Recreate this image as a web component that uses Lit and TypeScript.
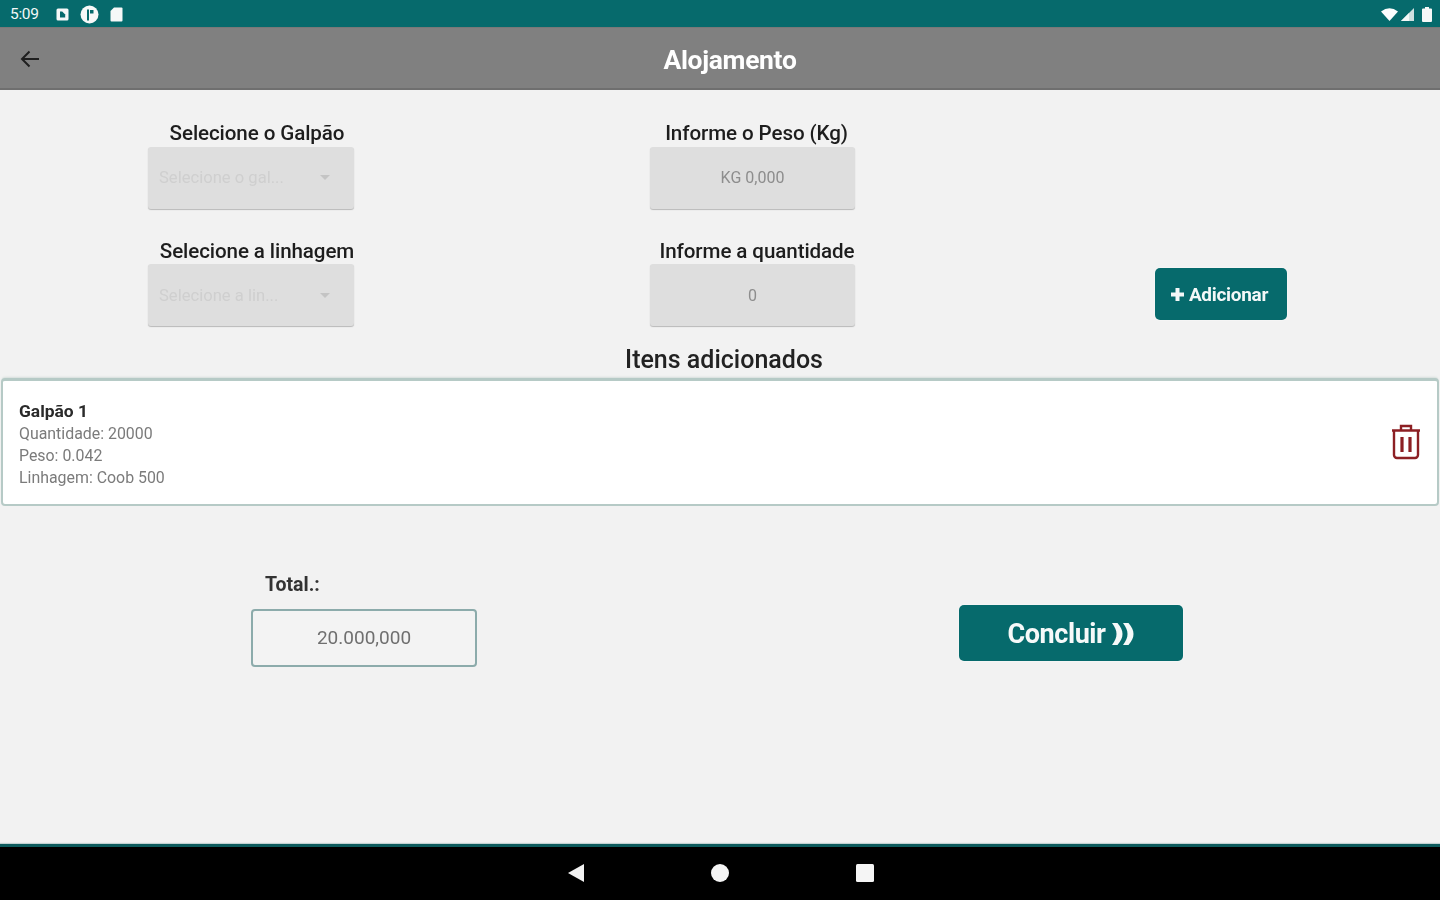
import { LitElement, html, css } from "lit";
import { customElement } from "lit/decorators.js";

@customElement("app-root")
export class AppRoot extends LitElement {
  static styles = css`
    :host { display: block; width: 1440px; height: 900px; font-family: Roboto, "Liberation Sans", sans-serif; background: #f2f2f2; overflow: hidden; }
    * { box-sizing: border-box; }
    .screen { width: 1440px; height: 900px; display: flex; flex-direction: column; filter: blur(0.6px); }
    .status { height: 27px; flex: none; background: #066a6c; display: flex; align-items: center; padding: 1px 8px 0 10px; color: #f4f8f8; font-size: 15.5px; }
    .status .time { width: 46px; letter-spacing: -0.3px; }
    .status svg { display: block; }
    .sl { display: flex; align-items: center; gap: 11px; }
    .sr { margin-left: auto; display: flex; align-items: center; gap: 3px; }
    .bar { height: 63px; flex: none; background: #808080; border-top: 1px solid #787878; border-bottom: 2px solid #6f6f6f; display: flex; align-items: center; padding-left: 20px; }
    .bar > svg { margin-top: 1px; }
    .bar .title { flex: 1; text-align: center; padding: 3px 20px 0 0; color: #fff; font-size: 26.4px; font-weight: 700; letter-spacing: -0.3px; }
    .main { flex: 1; display: flex; flex-direction: column; }
    .form { display: grid; grid-template-columns: 206px 205px 132px; column-gap: 296px; row-gap: 30px; padding: 31px 0 0 148px; }
    .form .add { margin-left: 4px; align-self: end; margin-bottom: 6px; }
    .field { display: flex; flex-direction: column; }
    .label { height: 25.5px; text-align: center; font-size: 20.6px; font-weight: 500; color: #1d1d1d; line-height: 24px; white-space: nowrap; letter-spacing: -0.1px; }
    .label.s { transform: translateX(6px); }
    .label.p { transform: translateX(4px); }
    .label.q { transform: translateX(4.5px); }
    .box { height: 62px; background: #dedede; border-radius: 3px; box-shadow: 0 1px 1px #b9b9b9; display: flex; align-items: center; font-size: 16px; }
    .box.center { justify-content: center; color: #8d8d8d; }
    .box.sel { padding: 0 24px 0 11px; justify-content: space-between; color: #cfcfcf; font-size: 16.6px; }
    .caret { width: 0; height: 0; border-left: 5px solid transparent; border-right: 5px solid transparent; border-top: 5px solid #c4c4c4; }
    .add { width: 132px; height: 52px; background: #066a6c; border-radius: 5px; color: #f4f8f8; font-size: 19px; font-weight: 700; display: flex; align-items: center; justify-content: center; gap: 4px; padding-right: 4px; box-shadow: 0 0 2px #fff; letter-spacing: -0.3px; }
    h2 { margin: 22px 0 0 0; height: 29.5px; line-height: 24px; text-align: center; font-size: 25px; font-weight: 500; color: #222; transform: translateX(4px); }
    .card { margin: 0 1px; height: 128px; background: #fff; border: 2px solid #b6cac6; border-top-width: 3px; border-radius: 4px; display: flex; align-items: center; justify-content: space-between; padding: 0 16px 0 16px; box-shadow: 0 -2px 2px -1px #d5dedb; }
    .info { display: flex; flex-direction: column; font-size: 15.9px; line-height: 21.6px; color: #7b7b7b; padding-top: 5px; }
    .info b { font-weight: 700; color: #2a2a2a; font-size: 17.4px; margin-bottom: 1px; }
    .bottom { display: flex; padding: 66px 0 0 251px; align-items: flex-start; }
    .total label { display: block; height: 37px; margin-left: 14px; font-size: 19.5px; line-height: 26px; font-weight: 700; color: #333; }
    .tbox { width: 226px; height: 58px; border: 2px solid #8cabab; border-radius: 4px; background: #f3f3f3; display: flex; align-items: center; justify-content: center; font-size: 19px; color: #6f6f6f; }
    .go { margin: 33px 0 0 482px; width: 224px; height: 56px; background: #066a6c; border-radius: 5px; display: flex; align-items: center; justify-content: center; gap: 5px; padding-top: 3px; color: #f6f9f9; font-size: 27px; font-weight: 700; letter-spacing: -0.4px; box-shadow: 0 0 2px #fff; }
    .nav { height: 56px; flex: none; background: #000; border-top: 3px solid #0d5b5d; display: flex; align-items: center; justify-content: center; gap: 126.5px; padding: 0 0 2px 0; box-shadow: 0 -1px 1px #c5d2d2; }
    .nav svg { display: block; }
  `;

  render() {
    return html`<div class="screen">
      <div class="status">
        <span class="time">5:09</span>
        <div class="sl">
          <svg width="13" height="13" viewBox="0 0 13 13"><rect x="0.5" y="0.5" width="12" height="12" rx="1.5" fill="#f6f8f8"/><path d="M4 3.500h2.200l3 3V9.500H4z" fill="#066a6c"/></svg>
          <svg width="19" height="19" viewBox="0 0 19 19"><circle cx="9.500" cy="9.500" r="9" fill="#f6f8f8"/><path d="M7 4.500h2v11H7z M10 5h3.500v3.500H10z" fill="#066a6c"/></svg>
          <svg width="13" height="15" viewBox="0 0 13 15"><path d="M4 .5h7.500a1 1 0 0 1 1 1v12a1 1 0 0 1-1 1h-10a1 1 0 0 1-1-1V4z" fill="#f6f8f8"/></svg>
        </div>
        <div class="sr">
          <svg width="17" height="13" viewBox="0 0 17 13"><path d="M0 3.500Q8.500-3 17 3.500L8.500 13z" fill="#fbfdfd"/></svg>
          <svg width="13" height="13" viewBox="0 0 13 13"><path d="M13 0V13H0z" fill="#cfe0e0"/><path d="M8 5V13H0z" fill="#f4f8f8"/></svg>
          <svg width="10" height="15" viewBox="0 0 10 15" style="margin-left:5px"><path d="M3 0h4v1.500h2a1 1 0 0 1 1 1V14a1 1 0 0 1-1 1H1a1 1 0 0 1-1-1V2.500a1 1 0 0 1 1-1h2z" fill="#f6f8f8"/></svg>
        </div>
      </div>
      <div class="bar">
        <svg width="20" height="20" viewBox="0 0 20 20" fill="none" stroke="#1f1f1f" stroke-width="2"><path d="M19 10H2M9.500 2.500 2 10l7.500 7.500"/></svg>
        <div class="title">Alojamento</div>
      </div>
      <div class="main">
        <div class="form">
          <div class="field"><div class="label s">Selecione o Galpão</div><div class="box sel"><span>Selecione o gal...</span><i class="caret"></i></div></div>
          <div class="field"><div class="label p">Informe o Peso (Kg)</div><div class="box center">KG 0,000</div></div>
          <div></div>
          <div class="field"><div class="label s">Selecione a linhagem</div><div class="box sel"><span>Selecione a lin...</span><i class="caret"></i></div></div>
          <div class="field"><div class="label q">Informe a quantidade</div><div class="box center">0</div></div>
          <div class="add">
            <svg width="15" height="15" viewBox="0 0 15 15"><path d="M5.500 1h4v4.500H14v4H9.500V14h-4V9.500H1v-4h4.500z" fill="#f4f8f8"/></svg>
            <span>Adicionar</span>
          </div>
        </div>
        <h2>Itens adicionados</h2>
        <div class="card">
          <div class="info">
            <b>Galpão 1</b>
            <span>Quantidade: 20000</span>
            <span>Peso: 0.042</span>
            <span>Linhagem: Coob 500</span>
          </div>
          <svg width="30" height="36" viewBox="0 0 30 36" fill="none" stroke="#8c1f23" stroke-width="2.400">
            <path d="M1 6.500h28M10 6V2h10V6"/>
            <path d="M3 7v24a3 3 0 0 0 3 3h18a3 3 0 0 0 3-3V7"/>
            <path d="M11 13v15M19 13v15" stroke-width="3.200"/>
          </svg>
        </div>
        <div class="bottom">
          <div class="total">
            <label>Total.:</label>
            <div class="tbox">20.000,000</div>
          </div>
          <div class="go">
            <span>Concluir</span>
            <svg width="24" height="24" viewBox="0 0 24 24" fill="#f6f9f9"><path d="M1 1h5.500c3.500 4 5 7.500 5 11s-1.500 7-5 11H1c3-4 4.500-7.500 4.500-11S4 5 1 1z"/><path d="M12 1h5.500c3.500 4 5 7.500 5 11s-1.500 7-5 11H12c3-4 4.500-7.500 4.500-11S15 5 12 1z"/></svg>
          </div>
        </div>
      </div>
      <div class="nav">
        <svg width="18" height="20" viewBox="0 0 18 20"><path d="M17 1v18L1 10z" fill="#f2f2f2"/></svg>
        <svg width="18" height="18" viewBox="0 0 18 18"><circle cx="9" cy="9" r="9" fill="#f5f5f5"/></svg>
        <svg width="18" height="18" viewBox="0 0 18 18"><rect width="18" height="18" rx="1.500" fill="#f5f5f5"/></svg>
      </div>
    </div>`;
  }
}
